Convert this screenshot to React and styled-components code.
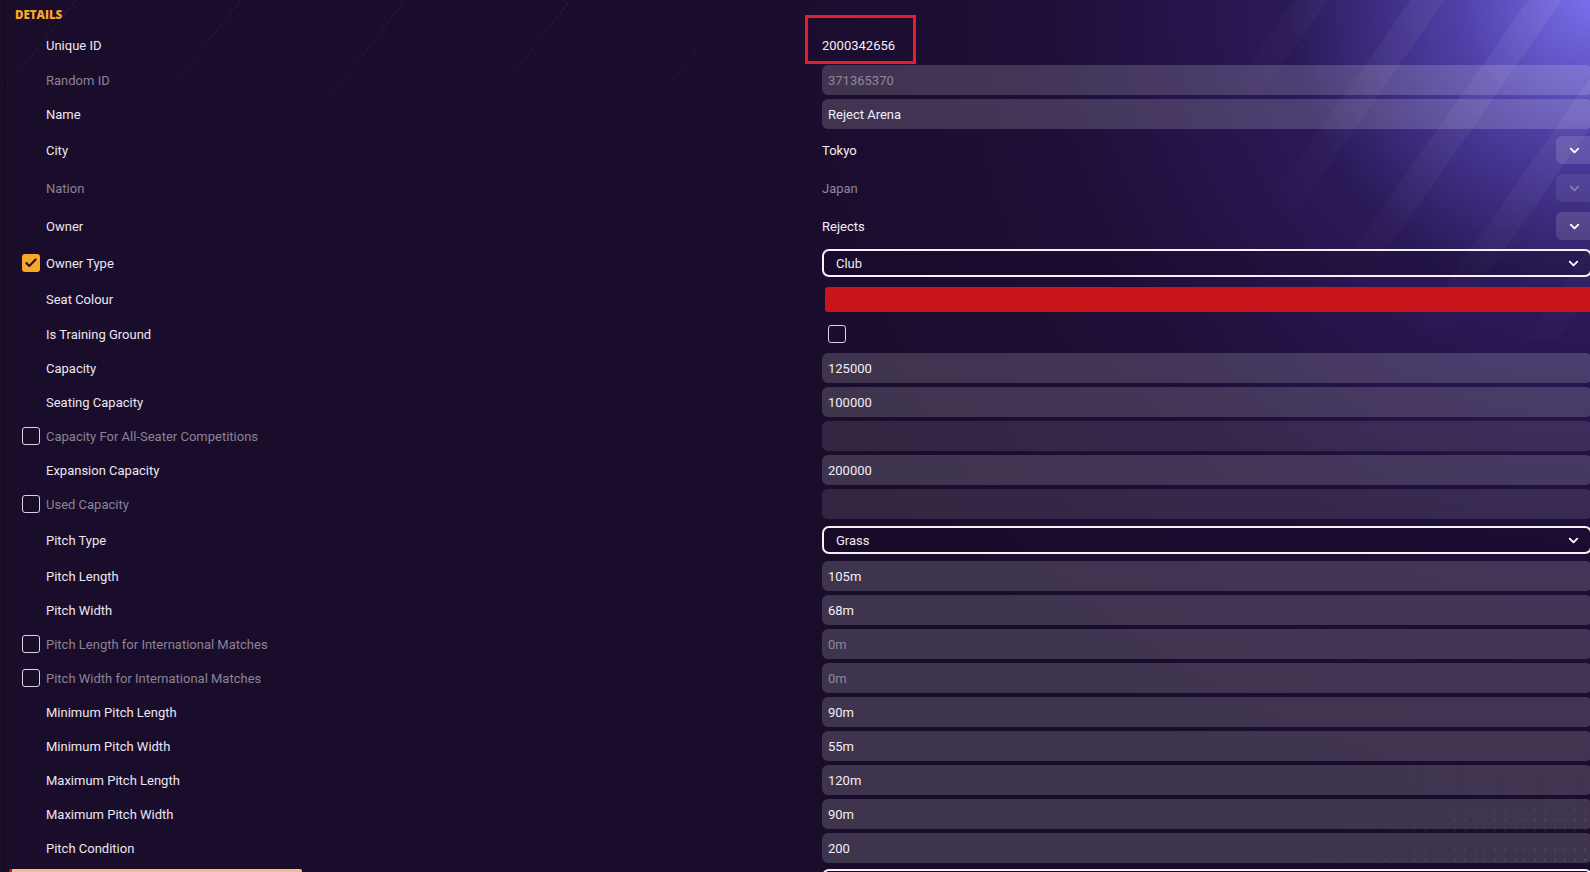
import React from "react";
import styled, { createGlobalStyle } from "styled-components";
import { ChevronDown, Check } from "lucide-react";

const GlobalStyle = createGlobalStyle`
  html, body {
    margin: 0;
    padding: 0;
    background: #1a0c2b;
    overflow: hidden;
  }
  * { box-sizing: border-box; }
`;

const Page = styled.div`
  position: relative;
  width: 100vw;
  min-height: 872px;
  overflow: hidden;
  font-family: Roboto, "Noto Sans", sans-serif;
  font-size: 13px;
  color: #ece8f2;
  background:
    radial-gradient(circle at 100% 0%, rgba(124, 114, 242, 0.97) 0, rgba(98, 82, 210, 0.75) 130px, rgba(66, 44, 150, 0.42) 300px, rgba(44, 24, 100, 0.2) 560px, rgba(26, 12, 43, 0) 860px),
    #1a0c2b;
`;

const StripeDecor = styled.div`
  position: absolute;
  top: 0;
  right: 0;
  width: 460px;
  height: 340px;
  pointer-events: none;
  background: repeating-linear-gradient(
    125deg,
    rgba(255, 255, 255, 0) 0 38px,
    rgba(255, 255, 255, 0.07) 38px 66px,
    rgba(255, 255, 255, 0) 66px 96px
  );
  -webkit-mask-image: radial-gradient(circle at 100% 0%, #000 0, rgba(0,0,0,0.6) 200px, transparent 400px);
  mask-image: radial-gradient(circle at 100% 0%, #000 0, rgba(0,0,0,0.6) 200px, transparent 400px);
`;

const LineDecor = styled.div`
  position: absolute;
  top: 0;
  left: 0;
  width: 700px;
  height: 160px;
  pointer-events: none;
  background: repeating-linear-gradient(
    -52deg,
    rgba(255, 255, 255, 0) 0 70px,
    rgba(255, 255, 255, 0.05) 70px 71px,
    rgba(255, 255, 255, 0) 71px 130px
  );
  -webkit-mask-image: linear-gradient(180deg, #000, transparent);
  mask-image: linear-gradient(180deg, #000, transparent);
`;

const DotDecor = styled.div`
  position: absolute;
  right: 0;
  bottom: 0;
  width: 380px;
  height: 200px;
  pointer-events: none;
  background-image: radial-gradient(circle, rgba(170, 150, 255, 0.18) 1px, transparent 1.4px);
  background-size: 10px 10px;
  -webkit-mask-image: radial-gradient(ellipse at 100% 100%, #000 0, transparent 70%);
  mask-image: radial-gradient(ellipse at 100% 100%, #000 0, transparent 70%);
`;

const Panel = styled.div`
  position: relative;
  margin-left: 4px;
  width: 1588px;
  border-left: 1px solid #0c0615;
  min-height: 872px;
`;

const Header = styled.div`
  height: 28px;
  display: flex;
  align-items: center;
  padding-left: 10px;
  font-family: "Open Sans", Roboto, sans-serif;
  font-size: 11.5px;
  font-weight: 800;
  color: #f5a72a;
`;

const Row = styled.div`
  display: grid;
  grid-template-columns: 817px 1fr;
  height: ${(p) => p.$h || 34}px;
`;

const LabelCell = styled.div`
  display: flex;
  align-items: center;
  gap: 6px;
  padding-left: 17px;
`;

const CheckSlot = styled.div`
  width: 18px;
  height: 18px;
  flex: none;
  display: flex;
  align-items: center;
  justify-content: center;
  border-radius: 3px;
  ${(p) =>
    p.$kind === "on"
      ? "background: #f7a72a;"
      : p.$kind === "off"
      ? "border: 1.5px solid #d9d3e2;"
      : ""}
`;

const LabelText = styled.span`
  color: ${(p) => (p.$dim ? "#8b8397" : "#ebe7f1")};
  white-space: nowrap;
`;

const ValueCell = styled.div`
  display: flex;
  align-items: center;
  justify-content: space-between;
  min-width: 0;
`;

const Field = styled.div`
  width: 100%;
  height: 30px;
  border-radius: 6px;
  display: flex;
  align-items: center;
  padding-left: 6px;
  background: ${(p) => (p.$empty ? "rgba(255,255,255,0.11)" : "rgba(255,255,255,0.165)")};
  color: ${(p) => (p.$dim ? "#8f879b" : "#f2eff6")};
`;

const PlainValue = styled.span`
  color: ${(p) => (p.$dim ? "#8f879b" : "#f2eff6")};
`;

const DropButton = styled.div`
  width: 36px;
  height: 28px;
  border-radius: 6px 0 0 6px;
  display: flex;
  align-items: center;
  justify-content: center;
  background: ${(p) => (p.$dim ? "rgba(255,255,255,0.07)" : "rgba(255,255,255,0.13)")};
  color: ${(p) => (p.$dim ? "rgba(255,255,255,0.3)" : "#ffffff")};
`;

const Select = styled.div`
  width: 100%;
  height: 28px;
  border: 2px solid #f4f2f8;
  border-radius: 7px;
  display: flex;
  align-items: center;
  justify-content: space-between;
  padding: 0 9px 0 12px;
  color: #efecf4;
  background: rgba(20, 8, 36, 0.35);
`;

const ColourBar = styled.div`
  margin-left: 3px;
  width: 100%;
  height: 25px;
  border-radius: 3px;
  background: #c8151a;
`;

const BoxCheck = styled.div`
  margin-left: 6px;
  width: 18px;
  height: 18px;
  border: 1.5px solid #d9d3e2;
  border-radius: 3px;
`;

const PeachBar = styled.div`
  align-self: flex-start;
  margin-top: 4px;
  margin-left: -13px;
  width: 293px;
  height: 10px;
  border-radius: 2px;
  border-left: 3px solid #c8151a;
  background: #f0bd95;
`;

const SelectTop = styled.div`
  align-self: flex-start;
  margin-top: 4px;
  width: 100%;
  height: 28px;
  border: 2px solid #f4f2f8;
  border-radius: 7px;
`;

const Annotation = styled.div`
  position: absolute;
  left: 800px;
  top: 15px;
  width: 111px;
  height: 49px;
  border: 3px solid #e11f26;
  pointer-events: none;
`;

const rows = [
  { label: "Unique ID", h: 35, type: "plain", value: "2000342656" },
  { label: "Random ID", dim: true, type: "field", value: "371365370", valueDim: true },
  { label: "Name", type: "field", value: "Reject Arena" },
  { label: "City", h: 38, type: "drop", value: "Tokyo" },
  { label: "Nation", dim: true, h: 38, type: "drop", value: "Japan", valueDim: true },
  { label: "Owner", h: 38, type: "drop", value: "Rejects" },
  { label: "Owner Type", check: "on", h: 36, type: "select", value: "Club" },
  { label: "Seat Colour", h: 36, type: "colour" },
  { label: "Is Training Ground", type: "box" },
  { label: "Capacity", type: "field", value: "125000" },
  { label: "Seating Capacity", type: "field", value: "100000" },
  { label: "Capacity For All-Seater Competitions", check: "off", dim: true, type: "field", empty: true },
  { label: "Expansion Capacity", type: "field", value: "200000" },
  { label: "Used Capacity", check: "off", dim: true, type: "field", empty: true },
  { label: "Pitch Type", h: 38, type: "select", value: "Grass" },
  { label: "Pitch Length", type: "field", value: "105m" },
  { label: "Pitch Width", type: "field", value: "68m" },
  { label: "Pitch Length for International Matches", check: "off", dim: true, type: "field", value: "0m", valueDim: true },
  { label: "Pitch Width for International Matches", check: "off", dim: true, type: "field", value: "0m", valueDim: true },
  { label: "Minimum Pitch Length", type: "field", value: "90m" },
  { label: "Minimum Pitch Width", type: "field", value: "55m" },
  { label: "Maximum Pitch Length", type: "field", value: "120m" },
  { label: "Maximum Pitch Width", type: "field", value: "90m" },
  { label: "Pitch Condition", type: "field", value: "200" },
];

const renderValue = (r) => {
  switch (r.type) {
    case "plain":
      return <PlainValue>{r.value}</PlainValue>;
    case "drop":
      return (
        <>
          <PlainValue $dim={r.valueDim}>{r.value}</PlainValue>
          <DropButton $dim={r.valueDim}>
            <ChevronDown size={15} strokeWidth={3} />
          </DropButton>
        </>
      );
    case "select":
      return (
        <Select>
          <span>{r.value}</span>
          <ChevronDown size={15} strokeWidth={3} color="#ffffff" />
        </Select>
      );
    case "colour":
      return <ColourBar />;
    case "box":
      return <BoxCheck />;
    default:
      return (
        <Field $empty={r.empty} $dim={r.valueDim}>
          {r.value}
        </Field>
      );
  }
};

export default function App() {
  return (
    <Page>
      <GlobalStyle />
      <LineDecor />
      <StripeDecor />
      <DotDecor />
      <Panel>
        <Header>DETAILS</Header>
        {rows.map((r) => (
          <Row key={r.label} $h={r.h}>
            <LabelCell>
              <CheckSlot $kind={r.check}>
                {r.check === "on" && <Check size={14} strokeWidth={3.5} color="#1a0c2b" />}
              </CheckSlot>
              <LabelText $dim={r.dim}>{r.label}</LabelText>
            </LabelCell>
            <ValueCell>{renderValue(r)}</ValueCell>
          </Row>
        ))}
        <Row $h={40}>
          <LabelCell>
            <PeachBar />
          </LabelCell>
          <ValueCell>
            <SelectTop />
          </ValueCell>
        </Row>
        <Annotation />
      </Panel>
    </Page>
  );
}
